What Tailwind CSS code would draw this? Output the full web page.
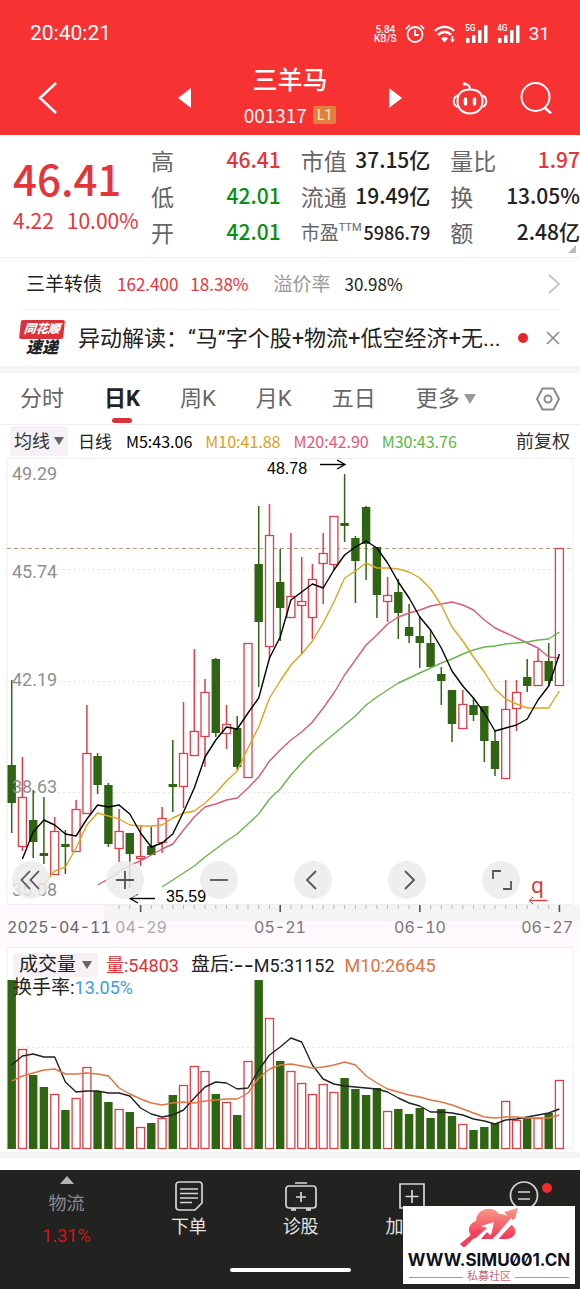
<!DOCTYPE html>
<html lang="zh-CN">
<head>
<meta charset="utf-8">
<meta name="viewport" content="width=device-width, initial-scale=1">
<title>三羊马 001317</title>
<script src="https://cdn.jsdelivr.net/npm/@tailwindcss/browser@4"></script>
</head>
<body class="bg-white text-[#222] font-['Roboto','Noto_Sans_CJK_SC',sans-serif]">
<div class="relative flex min-h-screen flex-col overflow-hidden">

  <header class="bg-[#f73233] text-white">
    <div class="flex h-[64px] items-center justify-between px-[30px] pt-1">
      <time class="text-[21px]">20:40:21</time>
      <div class="flex items-center gap-2">
        <span class="text-center text-[10px] leading-[9px] font-medium">5.84<br>KB/S</span>
        <svg class="h-5 w-5" viewBox="0 0 20 20" fill="none" stroke="#fff" stroke-width="1.8" stroke-linecap="round"><circle cx="10" cy="10.500" r="7.500"/><path d="M10 6.500v4.500h3M1.500 4.500l2.500-2.800M18.500 4.500L16 1.700"/></svg>
        <svg class="h-5 w-6" viewBox="0 0 24 20" fill="none" stroke="#fff" stroke-width="2.400"><path d="M2 7c5-5.500 14-5.500 19 0M5 11c4-4 9.500-4 13 0"/><path d="M8 14.500c2-2 5-2 7 0l-3.500 4z" fill="#fff" stroke="none"/><path d="M19.500 12v5" stroke-width="1.500"/><path d="M17 15.500h5l-2.500 3z" fill="#fff" stroke="none"/></svg>
        <div class="flex gap-2">
          <svg class="h-5 w-6" viewBox="0 0 24 20" fill="#fff"><text x="0" y="7" font-size="8.500" font-weight="500">5G</text><rect x="1" y="14" width="3.500" height="5" rx="1"/><rect x="7" y="11" width="3.500" height="8" rx="1"/><rect x="13" y="6" width="3.500" height="13" rx="1"/><rect x="19" y="1" width="3.500" height="18" rx="1"/></svg>
          <svg class="h-5 w-6" viewBox="0 0 24 20" fill="#fff"><text x="0" y="7" font-size="8.500" font-weight="500">4G</text><rect x="1" y="14" width="3.500" height="5" rx="1"/><rect x="7" y="11" width="3.500" height="8" rx="1"/><rect x="13" y="6" width="3.500" height="13" rx="1"/><rect x="19" y="1" width="3.500" height="18" rx="1"/></svg>
        </div>
        <span class="text-[19px]">31</span>
      </div>
    </div>
    <div class="grid h-[71px] grid-cols-[1fr_224px_1fr] items-center pb-[3px]">
      <button class="ml-9 h-9 w-6 justify-self-start" aria-label="返回"><svg class="h-9 w-6" viewBox="0 0 24 36" fill="none" stroke="#fff" stroke-width="2.500"><path d="M20 3L4 18l16 15"/></svg></button>
      <div class="flex items-center justify-between">
        <button aria-label="上一只"><svg class="h-5 w-[14px]" viewBox="0 0 14 20" fill="#fff"><path d="M13 0v20L0 10z"/></svg></button>
        <div class="flex flex-col items-center">
          <h1 class="text-[25px] leading-[34px] font-medium">三羊马</h1>
          <div class="flex h-[34px] items-center gap-[6px]"><span class="font-['Noto_Sans_CJK_SC',sans-serif] text-[19px] leading-6">001317</span><span class="rounded-xs bg-[#e2813f] px-1 text-[14px] leading-[18px] text-[#ffeabf]">L1</span></div>
        </div>
        <button aria-label="下一只"><svg class="h-5 w-[14px]" viewBox="0 0 14 20" fill="#fff"><path d="M1 0v20l13-10z"/></svg></button>
      </div>
      <div class="flex items-center gap-8 justify-self-end pr-7">
        <button aria-label="智能助手"><svg class="h-9 w-9" viewBox="0 0 36 36" fill="none" stroke="#fff" stroke-width="2"><path d="M18 9.500c8 0 12.500 4 12.500 11.500S26 33.500 18 33.500 5.500 28.500 5.500 21 10 9.500 18 9.500z"/><path d="M5.500 15.500C.5 17.500.5 25 5.500 27M30.500 15.500c5 2 5 9.500 0 11.500"/><path d="M18 9.500c0-3-1-5-5-5.500"/><circle cx="12.500" cy="4" r="1.800" fill="#fff" stroke="none"/><path d="M13.500 19v5M22.500 19v5" stroke-width="3.400" stroke-linecap="round"/></svg></button>
        <button aria-label="搜索"><svg class="h-8 w-8" viewBox="0 0 32 32" fill="none" stroke="#fff" stroke-width="2"><circle cx="15.500" cy="15" r="14"/><path d="M24.500 25.500l6.500 6" stroke-width="2.500"/></svg></button>
      </div>
    </div>
  </header>

  <section class="relative flex border-b border-[#eee] py-[7px] pl-[13px] font-['Noto_Sans_CJK_SC',sans-serif]">
    <div class="w-[138px] text-[#e5343a]">
      <p class="mt-2 text-[42px] leading-[55px] font-medium">46.41</p>
      <p class="mt-[3px] flex gap-[13px] text-[21px] leading-6"><span>4.22</span><span>10.00%</span></p>
    </div>
    <dl class="grid flex-1 grid-cols-3 gap-x-5 text-[21px] [&_dd]:font-medium [&>div]:flex [&>div]:h-9 [&>div]:items-center [&>div]:justify-between [&>div]:whitespace-nowrap [&_dt]:text-[23px] [&_dt]:text-[#666]">
      <div><dt>高</dt><dd class="text-[#e5343a]">46.41</dd></div>
      <div><dt>市值</dt><dd>37.15亿</dd></div>
      <div><dt>量比</dt><dd class="text-[#e5343a]">1.97</dd></div>
      <div><dt>低</dt><dd class="text-[#0a8f12]">42.01</dd></div>
      <div><dt>流通</dt><dd>19.49亿</dd></div>
      <div><dt>换</dt><dd>13.05%</dd></div>
      <div><dt>开</dt><dd class="text-[#0a8f12]">42.01</dd></div>
      <div><dt class="flex"><span class="text-[19px]">市盈</span><span class="font-['Roboto'] text-[11px] leading-5">TTM</span></dt><dd class="text-[18px]">5986.79</dd></div>
      <div><dt>额</dt><dd>2.48亿</dd></div>
    </dl>
    <svg class="absolute right-1 bottom-1 h-2 w-2" viewBox="0 0 8 8" fill="#bbb"><path d="M8 0v8H0z"/></svg>
  </section>

  <a href="#bond" class="mx-5 flex h-[52px] items-center border-b border-[#f3f3f3] pl-[6px] font-['Noto_Sans_CJK_SC',sans-serif] text-[17px]">
    <span class="text-[19px]">三羊转债</span>
    <span class="ml-[15px] text-[#e5343a]">162.400</span>
    <span class="ml-3 text-[#e5343a]">18.38%</span>
    <span class="ml-[25px] text-[19px] text-[#999]">溢价率</span>
    <span class="ml-[14px]">30.98%</span>
    <svg class="ml-auto h-5 w-3" viewBox="0 0 12 20" fill="none" stroke="#c4c4c4" stroke-width="1.800"><path d="M1 1l10 9-10 9"/></svg>
  </a>

  <section class="flex h-[56px] items-center px-5">
    <div class="flex w-11 shrink-0 flex-col items-center italic">
      <span class="w-11 -skew-x-6 rounded-xs bg-[#d9333a] text-center text-[12px] leading-[19px] font-black text-white">同花顺</span>
      <span class="text-[16px] leading-[18px] font-black text-[#222]">速递</span>
    </div>
    <a href="#news" class="ml-[14px] w-[432px] truncate text-[22px]">异动解读：“马”字个股+物流+低空经济+无...</a>
    <span class="ml-auto h-[10px] w-[10px] shrink-0 rounded-full bg-[#e8242b]"></span>
    <button class="ml-[18px] shrink-0" aria-label="关闭"><svg class="h-[14px] w-[14px]" viewBox="0 0 14 14" stroke="#8a8a8a" stroke-width="1.600"><path d="M1 1l12 12M13 1L1 13"/></svg></button>
  </section>
  <div class="h-[7px] bg-[#f5f5f5]"></div>

  <nav class="flex h-[52px] items-center gap-10 border-b border-[#f0f0f0] px-5 text-[22px] whitespace-nowrap text-[#666]">
    <button>分时</button>
    <button class="relative font-bold text-[#222]">日K<span class="absolute inset-x-2 -bottom-2 h-[5px] rounded-sm bg-[#d9333a]"></span></button>
    <button>周K</button>
    <button>月K</button>
    <button>五日</button>
    <button class="flex items-center gap-1">更多<svg class="h-[10px] w-3" viewBox="0 0 12 10" fill="#999"><path d="M0 0h12L6 10z"/></svg></button>
    <button class="ml-auto" aria-label="设置"><svg class="h-6 w-6" viewBox="0 0 24 24" fill="none" stroke="#8c8c8c" stroke-width="2"><path d="M6.500 1.500h11L23 12l-5.500 10.500h-11L1 12z" stroke-linejoin="round"/><circle cx="12" cy="12" r="3.500"/></svg></button>
  </nav>

  <div class="flex h-[31px] items-center px-[10px] font-['Noto_Sans_CJK_SC',sans-serif] text-[16px] whitespace-nowrap">
    <button class="flex h-[30px] items-center gap-1 rounded-xs bg-[#f5f1f4] px-1 text-[18px] text-[#333]">均线<svg class="h-2 w-[10px]" viewBox="0 0 10 8" fill="#666"><path d="M0 0h10L5 8z"/></svg></button>
    <span class="ml-[10px] text-[17px]">日线</span>
    <span class="ml-[14px] text-black">M5:43.06</span>
    <span class="ml-[13px] text-[#dba01c]">M10:41.88</span>
    <span class="ml-[13px] text-[#dd5a77]">M20:42.90</span>
    <span class="ml-[13px] text-[#5cb845]">M30:43.76</span>
    <button class="ml-auto text-[18px] text-[#333]">前复权</button>
  </div>

  <section class="relative">
    <svg id="price" class="block h-auto w-full" viewBox="0 456 580 489" role="img" aria-label="日K线图"></svg>
    <div class="absolute inset-x-3 top-[405px] flex gap-14 [&>button]:h-[38px] [&>button]:w-[38px] [&>button]:rounded-full [&>button]:bg-[#ebebeb]/85 [&_svg]:h-[38px] [&_svg]:w-[38px] [&_svg]:fill-none [&_svg]:stroke-[#555] [&_svg]:stroke-[1.800]">
      <button aria-label="最早"><svg viewBox="0 0 38 38"><path d="M18 10L9.500 19l8.500 9M27 10l-8.500 9 8.500 9"/></svg></button>
      <button aria-label="放大"><svg viewBox="0 0 38 38"><path d="M10 19h18M19 10v18"/></svg></button>
      <button aria-label="缩小"><svg viewBox="0 0 38 38"><path d="M10 19h18"/></svg></button>
      <button aria-label="左移"><svg viewBox="0 0 38 38"><path d="M22 10l-9 9 9 9"/></svg></button>
      <button aria-label="右移"><svg viewBox="0 0 38 38"><path d="M17 10l9 9-9 9"/></svg></button>
      <button aria-label="全屏"><svg viewBox="0 0 38 38"><path d="M11 18v-8h8M21 28h8v-8"/></svg></button>
    </div>
  </section>

  <section class="relative">
    <svg id="volume" class="block h-auto w-full" viewBox="0 945 580 207" role="img" aria-label="成交量图"></svg>
    <div class="absolute inset-x-[13px] top-2 text-[18px] whitespace-nowrap">
      <div class="flex h-6 items-center">
        <button class="flex h-6 items-center gap-[6px] rounded-xs bg-[#f5f1f4] px-[6px] text-[19px]">成交量<svg class="h-2 w-[10px]" viewBox="0 0 10 8" fill="#666"><path d="M0 0h10L5 8z"/></svg></button>
        <span class="ml-2 text-[#d9333a]">量:54803</span>
        <span class="ml-3 flex items-center"><span class="text-[19px]">盘后:</span><span class="font-['Inter'] text-[22px] leading-6">--</span>M5:31152</span>
        <span class="ml-[10px] text-[#e07442]">M10:26645</span>
      </div>
      <p class="text-[19px] leading-[22px]">换手率:<span class="text-[18px] text-[#3b9fd6]">13.05%</span></p>
    </div>
  </section>
  <div class="h-[6px] bg-[#f4f4f4]"></div>

  <footer class="mt-3 flex grow flex-col bg-[#222221] text-[18px] text-[#e4e4e4]">
    <nav class="grid h-[86px] grid-cols-[133px_repeat(4,1fr)]">
      <a href="#sector" class="flex flex-col items-center pt-[6px] text-[#8a8a94]"><svg class="h-2 w-[14px]" viewBox="0 0 14 8" fill="#b5b5b5"><path d="M7 0l7 8H0z"/></svg><span class="mt-[6px] leading-7">物流</span><span class="mt-1 leading-7 text-[#d91313]">1.31%</span></a>
      <a href="#order" class="flex flex-col items-center pt-[10px]"><svg class="h-8 w-8" viewBox="0 0 32 32" fill="none" stroke="#d6d6d6" stroke-width="1.700"><path d="M6 2h20a3 3 0 013 3v18l-7 7H6a3 3 0 01-3-3V5a3 3 0 013-3zM7 9h18M7 13.500h18M7 18h18M7 22.500h12"/></svg><span class="leading-[30px]">下单</span></a>
      <a href="#diagnose" class="flex flex-col items-center pt-[10px]"><svg class="h-8 w-8" viewBox="0 0 32 32" fill="none" stroke="#d6d6d6" stroke-width="1.700"><rect x="1" y="6" width="30" height="22" rx="3"/><path d="M10 3h12M16 12v10M11 17h10"/><path d="M6 29.500h5M21 29.500h5" stroke-width="2.500"/></svg><span class="leading-[30px]">诊股</span></a>
      <a href="#favorite" class="flex flex-col items-center pt-[10px]"><svg class="h-8 w-8" viewBox="0 0 32 32" fill="none" stroke="#d6d6d6" stroke-width="1.700"><path d="M4 4h24v24H4zM16 10v13M9.500 16.500h13"/></svg><span class="leading-[30px]">加自选</span></a>
      <a href="#more" class="relative flex flex-col items-center pt-[10px]"><svg class="h-8 w-8" viewBox="0 0 32 32" fill="none" stroke="#d6d6d6" stroke-width="1.700"><circle cx="16" cy="15.500" r="13.500"/><path d="M10 12h12M10 19h12"/></svg><span class="leading-[30px]">更多</span><span class="absolute top-[13px] right-[28px] h-[10px] w-[10px] rounded-full bg-[#ef2b2f]"></span></a>
    </nav>
    <div class="mx-auto mt-3 h-1 w-[121px] rounded-full bg-white"></div>
  </footer>

  <div class="absolute right-[5px] bottom-[5px] flex h-[78px] w-[172px] flex-col items-center bg-white">
    <svg class="h-[41px] w-[60px]" viewBox="0 0 60 41">
      <defs><linearGradient id="cloud" gradientUnits="userSpaceOnUse" x1="0" y1="2" x2="0" y2="36"><stop offset="0" stop-color="#f99a86"/><stop offset="1" stop-color="#f22c55"/></linearGradient></defs>
      <path d="M18 33C8 31 7 18 17 15 17 3 33-2 40 8c8-1 11 5 11 10 9 4 6 15-4 15z" fill="url(#cloud)"/>
      <path d="M8 40l20-18-6-2 13-4-3 14-4-4L16 40z" fill="#fff"/>
      <path d="M1 38l4 4 18-18-4-1z" fill="#f4405a"/>
      <path d="M25 36L52 10l5 3-20 23z" fill="#fff"/>
      <path d="M34 33l18-21 3 4 4-14-14 4 3 3-20 24z" fill="url(#cloud)"/>
      <path d="M33 35L57 13" stroke="#fff" stroke-width="2.500"/>
    </svg>
    <span class="mt-[2px] font-['Inter'] text-[17px] leading-[22px] font-bold whitespace-nowrap text-[#10101c] [font-feature-settings:'zero']">WWW.SIMU001.CN</span>
    <div class="flex w-full items-center gap-1 px-[6px] text-[11px] leading-[12px] text-[#c56a75]"><span class="h-px grow bg-[#cf8a92]"></span>私募社区<span class="h-px grow bg-[#cf8a92]"></span></div>
  </div>
</div>

<script>
const STEP = 10.74, X0 = 11.7, GREEN = '#2f6412', RED = '#d8404a';
const x = i => +(X0 + i * STEP).toFixed(1);

// Each candle: direction (d/u), body top, body bottom, wick top, wick bottom.
const candles = `d765,803,680,833 u797,847,757,851 d820,842,790,858 d853,856,797,864 u831,875,817,875 d844,847,830,874 u809,852,800,852 u753,814,705,814
d756,785,753,794 d785,844,783,847 u831,849,809,862 d833,854,833,888 u856,859,825,866 d846,855,827,855 u818,843,807,853 d784,787,740,812
u753,787,702,808 u731,756,649,756 u692,737,679,767 d659,733,658,737 u724,734,705,749 d728,767,716,770 u643,778,643,778 d564,622,506,687
u535,647,504,658 d582,608,549,641 u596,618,533,618 u601,606,557,654 u579,618,564,639 u553,564,533,604 u516,565,516,570 d523,526,474,542
d538,561,536,603 d507,544,506,580 d547,595,547,618 u595,602,577,622 d592,613,579,639 d627,636,604,643 d636,643,616,668 d643,667,630,667
d674,681,667,705 d690,724,690,742 u704,729,690,729 d705,715,698,721 d706,741,706,762 d741,769,730,776 u709,779,680,779 u692,709,680,731
d677,686,659,692 u661,686,649,686 d661,681,643,686 u548,686,548,686`.split(/\s+/).map(s => [s[0] === 'u', ...s.slice(1).split(',').map(Number)]);

const averages = [
  ['#d65b7c', 8, [885,879,872,865,861,855,849,844,830,817,807,804,800,798,788,777,761,750,740,732,722,708,693,675,660,645,635,624,617,613,610,606,604,602,605,610,620,628,633,638,643,648,657,658]],
  ['#69b650', 14, [887,880,873,866,857,849,841,834,824,814,799,789,775,763,752,743,734,725,716,705,697,690,683,678,673,668,663,659,654,650,647,646,644,643,642,640,639,632]],
  ['#dba520', 3, [884,871,867,848,825,813,816,819,825,826,826,825,818,813,811,803,793,781,771,748,727,698,681,665,654,641,623,602,578,571,563,568,568,569,572,578,589,605,627,641,657,672,689,699,704,708,708,708,691]],
  ['#000', 1, [859,832,820,825,834,836,819,805,807,805,814,833,847,843,834,812,788,757,740,727,729,713,698,658,637,600,592,584,588,570,555,547,541,548,563,582,598,617,630,648,671,686,698,713,731,728,725,719,700,686,654]],
];
const volumes = [980,1049,1075,1087,1094,1110,1098,1067,1091,1102,1109,1112,1127,1123,1118,1095,1085,1066,1071,1094,1102,1115,1061,980,1018,1061,1071,1083,1094,1084,1092,1078,1089,1095,1088,1111,1109,1114,1108,1118,1109,1116,1124,1130,1127,1123,1101,1120,1118,1118,1113,1080];
const volumeAverages = [
  ['#222', 0, [1065,1056,1054,1057,1057,1082,1092,1091,1091,1093,1093,1096,1108,1114,1117,1115,1110,1098,1087,1082,1083,1089,1088,1070,1055,1047,1038,1042,1065,1079,1084,1086,1087,1088,1089,1092,1098,1103,1106,1112,1112,1113,1115,1119,1121,1124,1120,1119,1117,1115,1113,1109]],
  ['#e07442', 0, [1081,1076,1073,1070,1069,1074,1074,1073,1074,1076,1088,1094,1099,1103,1105,1103,1102,1103,1101,1100,1099,1099,1093,1078,1069,1065,1064,1066,1068,1067,1065,1062,1065,1076,1083,1089,1092,1095,1097,1100,1102,1105,1109,1113,1117,1118,1117,1117,1118,1118,1118,1115]],
];

const line = (x1, y1, x2, y2, c, extra = '') => `<path d="M${x1} ${y1}L${x2} ${y2}" stroke="${c}" fill="none" ${extra}/>`;
const curve = ([c, from, ys]) => `<polyline points="${ys.map((y, i) => x(from + i) + ',' + y).join(' ')}" fill="none" stroke="${c}" stroke-width="1.400" stroke-linejoin="round"/>`;
const body = (i, up, top, bottom) => up
  ? `<rect x="${x(i) - 4}" y="${top + .5}" width="8" height="${Math.max(bottom - top - 1, 2)}" fill="#fff" stroke="${RED}" stroke-width="1.300"/>`
  : `<rect x="${x(i) - 4.2}" y="${top}" width="8.400" height="${bottom - top}" fill="${GREEN}"/>`;
const text = (tx, ty, s, c, size, anchor = 'start', font = 'Roboto') => `<text x="${tx}" y="${ty}" fill="${c}" font-size="${size}" font-family="${font}" text-anchor="${anchor}" style="font-variant-numeric:tabular-nums">${s}</text>`;

let p = '<rect x="0" y="905" width="580" height="40" fill="#fdf9fd"/><rect x="104" y="905" width="476" height="16" fill="#f5f4f5"/><rect x="7" y="458.500" width="566" height="446" fill="#fff" stroke="#eee"/>';
[569.5, 681.5, 792.5].forEach(y => p += line(58, y, 573, y, '#e4e4e4', 'stroke-dasharray="2 3"'));
p += line(7, 548.5, 573, 548.5, '#b9a07c', 'stroke-dasharray="4 3"');
candles.forEach(([up, t, b, h, l], i) => { p += line(x(i), h, x(i), l, up ? RED : GREEN, 'stroke-width="1.500"') + body(i, up, t, b); });
averages.forEach(a => p += curve(a));
[['49.29', 480], ['45.74', 578], ['42.19', 686], ['38.63', 793], ['35.08', 896]].forEach(([s, y]) => p += text(12, y, s, '#8f8f8f', 18));
p += text(267, 474, '48.78', '#000', 16, 'start', 'Liberation Sans') + line(320, 464.5, 344, 464.5, '#000', 'stroke-width="1.400"') + `<path d="M337 460l8 4.500-8 4.500" fill="none" stroke="#000" stroke-width="1.400"/>`;
p += text(166, 902, '35.59', '#000', 16, 'start', 'Liberation Sans') + line(131, 898.5, 155, 898.5, '#000', 'stroke-width="1.400"') + `<path d="M138 894l-8 4.500 8 4.500" fill="none" stroke="#000" stroke-width="1.400"/>`;
p += text(531, 893, 'q', '#d83a40', 21, 'start', 'Noto Sans') + line(530, 900.5, 547, 900.5, '#d83a40', 'stroke-width="1.400"') + `<path d="M533 897l-4 3.500 4 3.500" fill="none" stroke="#d83a40"/>`;
for (let i = 10; i < 52; i++) p += line(x(i), 905, x(i), i % 13 === 12 ? 912 : 909, i % 13 === 12 ? '#555' : '#bbb', i % 13 === 12 ? 'stroke-width="1.600"' : '');
p += text(7, 933, '2025-04-11', '#666', 16, 'start', 'Inter') + text(115, 933, '04-29', '#aaa', 16, 'start', 'Inter') + text(280, 933, '05-21', '#777', 16, 'middle', 'Inter') + text(420, 933, '06-10', '#777', 16, 'middle', 'Inter') + text(573, 933, '06-27', '#777', 16, 'end', 'Inter');
document.getElementById('price').innerHTML = p;

let v = '<rect x="0" y="945" width="580" height="2" fill="#fdf9fd"/><rect x="7" y="947.500" width="566" height="201" fill="#fff" stroke="#eee"/>' + line(7, 1047.5, 573, 1047.5, '#e4e4e4', 'stroke-dasharray="2 3"');
volumes.forEach((t, i) => v += body(i, candles[i][0], t, 1149));
volumeAverages.forEach(a => v += curve(a));
document.getElementById('volume').innerHTML = v;
</script>
</body>
</html>
